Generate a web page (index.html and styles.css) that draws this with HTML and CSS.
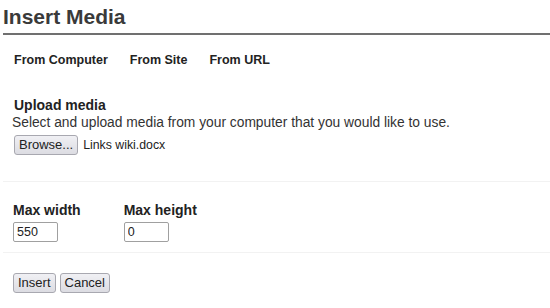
FILE: index.html
```html
<!DOCTYPE html>
<html lang="en">
<head>
    <meta charset="UTF-8">
    <title>Insert Media</title>
    <link rel="stylesheet" href="styles.css">
</head>
<body>
    <div class="dialog">
        <h1 class="title">Insert Media</h1>

        <div class="tabs">
            <span class="tab">From Computer</span>
            <span class="tab">From Site</span>
            <span class="tab">From URL</span>
        </div>

        <div class="section upload">
            <h2>Upload media</h2>
            <p class="hint">Select and upload media from your computer that you would like to use.</p>
            <div class="file-row">
                <button type="button" class="btn">Browse...</button>
                <span class="file-name">Links wiki.docx</span>
            </div>
        </div>

        <div class="section sizes">
            <div class="field">
                <label for="max-width">Max width</label>
                <input id="max-width" type="text" value="550">
            </div>
            <div class="field">
                <label for="max-height">Max height</label>
                <input id="max-height" type="text" value="0">
            </div>
        </div>

        <div class="actions">
            <button type="button" class="btn">Insert</button>
            <button type="button" class="btn">Cancel</button>
        </div>
    </div>
</body>
</html>
```

FILE: styles.css
```css
body {
    margin: 0;
    background: #fff;
    font-family: 'Liberation Sans', Arial, sans-serif;
    color: #222;
}

.dialog {
    padding-left: 3px;
}

.title {
    margin: 0;
    padding: 6px 0 5px 0;
    font-size: 21px;
    font-weight: bold;
    color: #3a3a3a;
    border-bottom: 2px solid #707070;
    line-height: 22px;
}

.tabs {
    display: flex;
    gap: 22px;
    padding: 18px 0 0 11px;
    height: 20px;
}

.tab {
    font-size: 12.5px;
    font-weight: bold;
    color: #222;
}

.section {
    padding: 0 0 0 9px;
    border-bottom: 1px solid #f2f2f2;
}

.upload {
    padding-top: 24px;
    padding-bottom: 26px;
}

.upload h2 {
    margin: 0 0 1px 2px;
    font-size: 14px;
    font-weight: bold;
    color: #222;
}

.hint {
    margin: 0;
    font-size: 13.8px;
    color: #333;
    line-height: 17px;
}

.file-row {
    display: flex;
    align-items: center;
    gap: 5px;
    margin-top: 4px;
    padding-left: 2px;
}

.file-name {
    font-size: 12.3px;
    color: #222;
}

.btn {
    font-family: 'Liberation Sans', Arial, sans-serif;
    font-size: 13px;
    color: #222;
    background: linear-gradient(#f0f0f4, #dcdce2);
    border: 1px solid #a8a8b0;
    border-radius: 3px;
    height: 20px;
    padding: 0 4px;
    line-height: 18px;
}

.sizes {
    display: flex;
    gap: 42px;
    padding-top: 20px;
    padding-bottom: 10px;
}

.field {
    display: flex;
    flex-direction: column;
    gap: 4px;
    padding-left: 1px;
}

.field label {
    font-size: 14px;
    font-weight: bold;
    color: #222;
}

.field input {
    width: 37px;
    height: 18px;
    padding: 0 3px;
    border: 1px solid #a0a0a0;
    border-radius: 2px;
    font-family: 'Liberation Sans', Arial, sans-serif;
    font-size: 12.5px;
    color: #222;
}

.actions {
    display: flex;
    gap: 4px;
    padding: 20px 0 0 10px;
}
```
